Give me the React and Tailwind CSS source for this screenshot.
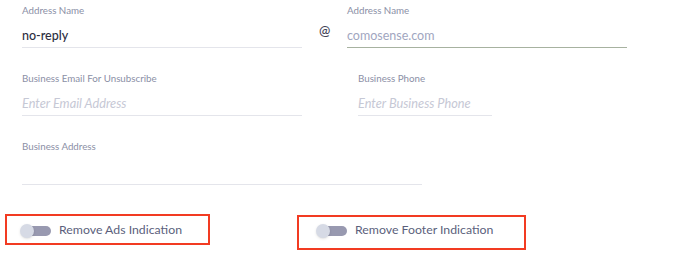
import React, { useState } from 'react';

const Field = ({ label, value, placeholder, width, lineClass = 'border-[#e4e5eb]', valueClass = 'text-[#2c2e3e] font-medium' }) => (
  <div className={`flex flex-col ${width}`}>
    <span className="text-[9.75px] leading-[12px] text-[#8b8fa6]">{label}</span>
    <div className={`h-[32px] flex items-end pb-[5px] border-b ${lineClass}`}>
      {value ? (
        <span className={`text-[12.5px] leading-[13px] ${valueClass}`}>{value}</span>
      ) : (
        <span className="text-[12.75px] leading-[13px] italic text-[#c6c8d5]">{placeholder}</span>
      )}
    </div>
  </div>
);

const Toggle = ({ label, on, onClick }) => (
  <div className="flex items-center gap-[8px] cursor-pointer" onClick={onClick}>
    <div className="relative w-[31px] h-[14px] flex items-center">
      <div className="ml-[5px] w-[26px] h-[10px] rounded-full bg-[#9899b0]" />
      <div className={`absolute top-0 ${on ? 'left-[17px]' : 'left-0'} w-[14px] h-[14px] rounded-full bg-[#d6dae5] shadow-sm`} />
    </div>
    <span className="text-[12.3px] text-[#5b5f7c]">{label}</span>
  </div>
);

export default function App() {
  const [ads, setAds] = useState(false);
  const [footer, setFooter] = useState(false);

  return (
    <div className="w-[678px] h-[279px] bg-white font-['Lato',sans-serif] pt-[4px]">
      <div className="pl-[22px] flex items-start">
        <Field label="Address Name" value="no-reply" width="w-[280px]" />
        <span className="mt-[16px] ml-[17px] w-[28px] text-[13.5px] font-medium text-[#3f4256]">@</span>
        <Field
          label="Address Name"
          value="comosense.com"
          width="w-[280px]"
          lineClass="border-[#a7b2a0]"
          valueClass="text-[#a1a6c0]"
        />
      </div>

      <div className="pl-[22px] mt-[24px] flex items-start">
        <Field label="Business Email For Unsubscribe" placeholder="Enter Email Address" width="w-[280px]" />
        <div className="ml-[56px]">
          <Field label="Business Phone" placeholder="Enter Business Phone" width="w-[134px]" />
        </div>
      </div>

      <div className="pl-[22px] mt-[24px] flex">
        <div className="flex flex-col w-[400px]">
          <span className="text-[9.75px] leading-[12px] text-[#8b8fa6]">Business Address</span>
          <div className="h-[33px] border-b border-[#e4e5eb]" />
        </div>
      </div>

      <div className="mt-[29px] flex items-start">
        <div className="ml-[5px] w-[205px] h-[31px] border-2 border-[#f23b22] pl-[13px] pt-[2px] flex items-center">
          <Toggle label="Remove Ads Indication" on={ads} onClick={() => setAds(!ads)} />
        </div>
        <div className="ml-[87px] mt-[1px] w-[229px] h-[35px] border-2 border-[#f23b22] pl-[17px] pb-[4px] flex items-center">
          <Toggle label="Remove Footer Indication" on={footer} onClick={() => setFooter(!footer)} />
        </div>
      </div>
    </div>
  );
}
